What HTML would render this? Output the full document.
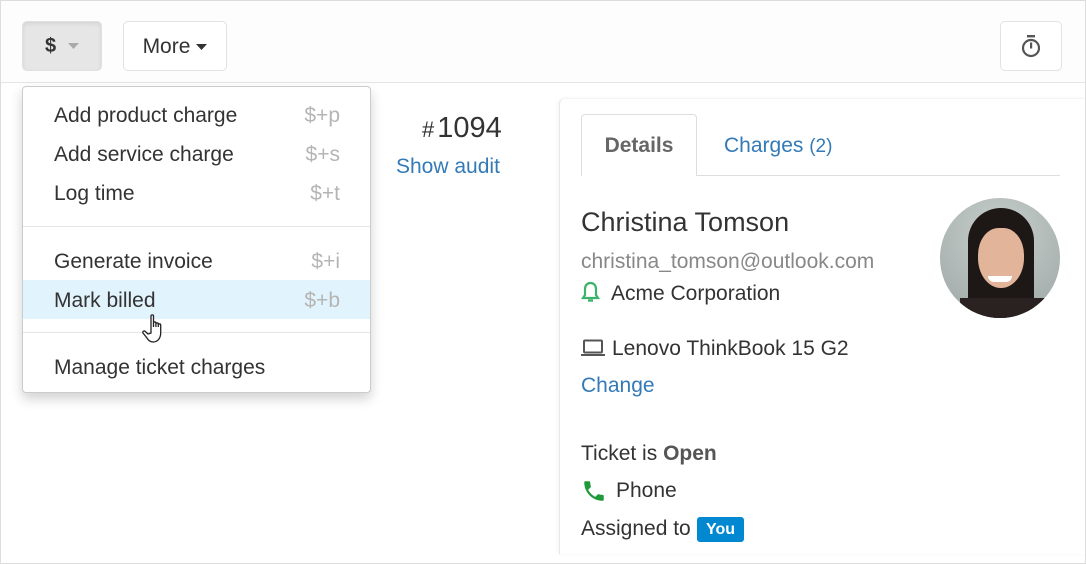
<!DOCTYPE html>
<html><head><meta charset="utf-8"><style>
*{box-sizing:border-box;margin:0;padding:0}
body{width:1086px;height:564px;overflow:hidden;background:#fff;font-family:"Liberation Sans",Arial,sans-serif;color:#333;position:relative}
.frame{position:absolute;inset:0;border:1px solid #ddd;}
.tb{position:absolute;left:1px;top:1px;right:1px;height:82px;background:#fdfdfd;border-bottom:1px solid #e5e5e5}
.btn{position:absolute;top:21px;height:50px;border:1px solid #e2e2e2;border-radius:5px;background:#fff;font-size:21px;display:flex;align-items:center;justify-content:center}
.a{position:absolute;white-space:nowrap}
.menu{position:absolute;left:22px;top:86px;width:349px;height:307px;background:#fff;border:1px solid #ccc;border-radius:4px;box-shadow:0 6px 12px rgba(0,0,0,.18)}
.it{position:absolute;left:0;right:0;height:39px;font-size:21px;line-height:41px;padding-left:31px;color:#333}
.it span{position:absolute;right:30px;color:#b5b5b5}
.dv{position:absolute;left:0;right:0;height:1px;background:#e5e5e5}
.panel{position:absolute;left:559px;top:98px;width:528px;height:456px;border-left:1px solid #e8e8e8;border-top:1px solid #f3f3f3;border-top-left-radius:6px;box-shadow:-2px 0 4px rgba(0,0,0,.04)}
</style></head><body>
<div class="tb"></div>
<div class="btn" style="left:22px;width:80px;background:#e6e6e6;border-color:#e0e0e0;box-shadow:inset 0 2px 4px rgba(0,0,0,.08)"><b style="margin-right:12px;font-size:20px">$</b><svg width="11" height="6"><path d="M0 0h11L5.5 6z" fill="#aaa"/></svg></div>
<div class="btn" style="left:123px;width:104px;padding-top:2px">More<svg width="11" height="6" style="margin-left:6px"><path d="M0 0h11L5.5 6z" fill="#333"/></svg></div>
<div class="btn" style="left:1000px;width:62px"><svg width="22" height="24" viewBox="0 0 22 24"><rect x="7" y="1" width="8" height="2.4" fill="#555"/><circle cx="11" cy="14" r="8" fill="none" stroke="#555" stroke-width="2.2"/><rect x="10" y="8.5" width="2.2" height="6" fill="#555"/></svg></div>

<div class="a" style="left:422px;top:112px;font-size:29px;color:#333"><span style="font-size:22px;margin-right:3px">#</span>1094</div>
<div class="a" style="left:396px;top:155px;font-size:21px;color:#337ab7">Show audit</div>

<div class="panel"></div>
<div class="a" style="left:581px;top:114px;width:116px;height:62px;border:1px solid #ddd;border-bottom:none;border-radius:4px 4px 0 0;background:#fff;font-size:21px;font-weight:bold;color:#666;text-align:center;line-height:62px">Details</div>
<div class="a" style="left:697px;top:175px;width:363px;height:1px;background:#ddd"></div>
<div class="a" style="left:724px;top:134px;font-size:21px;color:#337ab7">Charges <span style="font-size:19px">(2)</span></div>
<div class="a" style="left:581px;top:207px;font-size:27px;color:#333">Christina Tomson</div>
<div class="a" style="left:581px;top:250px;font-size:21px;color:#888">christina_tomson@outlook.com</div>
<svg class="a" style="left:581px;top:281px" width="19" height="22" viewBox="0 0 19 22"><path d="M9.5 2c-3.5 0-5.5 2.7-5.5 6v6L2 17h15l-2-3V8c0-3.3-2-6-5.5-6z" fill="none" stroke="#3bb36a" stroke-width="2.2"/><path d="M7 19.5h5" stroke="#3bb36a" stroke-width="2.4"/></svg>
<div class="a" style="left:611px;top:282px;font-size:21px;color:#333">Acme Corporation</div>
<div class="a" style="left:940px;top:198px;width:120px;height:120px;border-radius:50%;overflow:hidden;background:radial-gradient(circle at 50% 30%,#c9d0cd,#9aa5a3)">
 <div style="position:absolute;left:28px;top:10px;width:66px;height:115px;background:#1d1816;border-radius:33px 33px 10px 10px"></div>
 <div style="position:absolute;left:38px;top:30px;width:46px;height:60px;background:#e2b59a;border-radius:45% 45% 50% 50%"></div>
 <div style="position:absolute;left:48px;top:78px;width:24px;height:6px;background:#fff;border-radius:0 0 8px 8px"></div>
 <div style="position:absolute;left:20px;top:100px;width:90px;height:30px;background:#2a2220"></div>
</div>
<svg class="a" style="left:581px;top:339px" width="24" height="18" viewBox="0 0 24 18"><rect x="3" y="1.5" width="18" height="12" rx="1" fill="none" stroke="#555" stroke-width="2"/><path d="M0 15h24v2H0z" fill="#555"/></svg>
<div class="a" style="left:612px;top:337px;font-size:21px;color:#333">Lenovo ThinkBook 15 G2</div>
<div class="a" style="left:581px;top:374px;font-size:21px;color:#337ab7">Change</div>
<div class="a" style="left:581px;top:442px;font-size:21px;color:#333">Ticket is <b style="color:#555">Open</b></div>
<svg class="a" style="left:581px;top:478px" width="26" height="26" viewBox="0 0 24 24"><path d="M6.6 10.8c1.4 2.8 3.8 5.1 6.6 6.6l2.2-2.2c.3-.3.7-.4 1-.2 1.1.4 2.300.6 3.600.6.6 0 1 .4 1 1V20c0 .6-.4 1-1 1C10.6 21 3 13.4 3 4c0-.6.4-1 1-1h3.5c.6 0 1 .4 1 1 0 1.3.2 2.5.6 3.600.1.3 0 .7-.2 1z" fill="#1f9a3a"/></svg>
<div class="a" style="left:616px;top:479px;font-size:21px;color:#333">Phone</div>
<div class="a" style="left:581px;top:517px;font-size:21px;color:#333">Assigned to</div>
<div class="a" style="left:697px;top:517px;width:47px;height:25px;background:#0288d1;border-radius:3px;color:#fff;font-size:16px;font-weight:bold;text-align:center;line-height:25px">You</div>

<div class="menu">
 <div class="it" style="top:8px">Add product charge<span>$+p</span></div>
 <div class="it" style="top:47px">Add service charge<span>$+s</span></div>
 <div class="it" style="top:86px">Log time<span>$+t</span></div>
 <div class="dv" style="top:139px"></div>
 <div class="it" style="top:154px">Generate invoice<span>$+i</span></div>
 <div class="it" style="top:193px;background:#e1f3fc">Mark billed<span>$+b</span></div>
 <div class="dv" style="top:245px"></div>
 <div class="it" style="top:260px">Manage ticket charges</div>
</div>
<svg class="a" style="left:142px;top:313px" width="26" height="34" viewBox="0 0 26 34"><path d="M9 3c0-1.5 2.5-1.5 2.5 0v11l0-4c0-1.4 2.4-1.4 2.4 0v4-3c0-1.4 2.4-1.4 2.4 0v3-2c0-1.4 2.4-1.4 2.4 0v8c0 5-3 9-7.5 9-3.5 0-5-2-7-5L1 20c-.8-1.4 1-2.8 2.2-1.6L6 21l3-1V3z" fill="#fff" stroke="#222" stroke-width="1.3"/></svg>
<div class="frame"></div>
</body></html>
